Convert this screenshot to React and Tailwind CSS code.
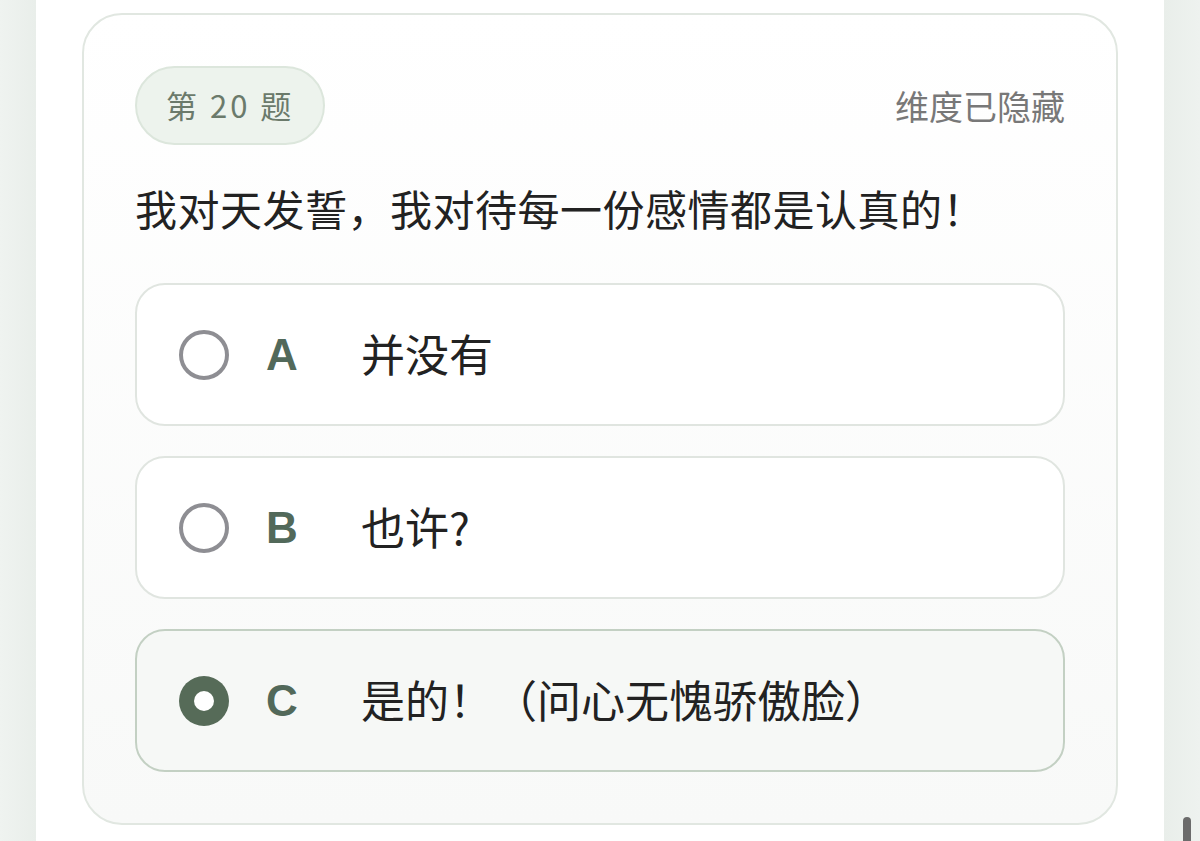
import React from 'react';

const FONT = { fontFamily: '"Noto Sans CJK SC", "Noto Sans", sans-serif' };
const LETTER_FONT = { fontFamily: '"Liberation Sans", Arial, sans-serif' };

const options = [
  { key: 'A', text: '并没有' },
  { key: 'B', text: '也许?' },
  { key: 'C', text: '是的！（问心无愧骄傲脸）', selected: true },
];

function Radio({ selected }) {
  if (selected) {
    return (
      <span className="flex h-[50px] w-[50px] shrink-0 items-center justify-center rounded-full bg-[#566b58]">
        <span className="h-[20px] w-[20px] rounded-full bg-white" />
      </span>
    );
  }
  return <span className="h-[50px] w-[50px] shrink-0 rounded-full border-[4px] border-[#8e8e93] bg-white" />;
}

function OptionRow({ option }) {
  return (
    <div
      className={`flex h-[143px] items-center rounded-[30px] border-2 pl-[42px] ${
        option.selected ? 'border-[#c3d0c3] bg-[#f6f8f6]' : 'border-[#e0e5e0] bg-white'
      }`}
    >
      <Radio selected={option.selected} />
      <span
        className="ml-[37px] w-[95px] text-[44px] font-bold leading-none text-[#52695a]"
        style={LETTER_FONT}
      >
        {option.key}
      </span>
      <span className="-mt-[4px] text-[44px] leading-none text-[#222]">{option.text}</span>
    </div>
  );
}

export default function App() {
  return (
    <div className="flex h-[841px] w-[1200px] overflow-hidden bg-[#eef2ef]" style={FONT}>
      <div className="w-[36px] shrink-0 bg-gradient-to-r from-[#eff3f0] to-[#e9eeea]" />

      <div className="w-[1128px] shrink-0 bg-white px-[46px] pt-[13px]">
        <div className="rounded-[40px] border-2 border-[#e1e7e1] bg-gradient-to-b from-white to-[#f8f9f8] px-[51px] pb-[51px] pt-[51px]">
          <div className="flex items-center justify-between">
            <span className="flex h-[79px] items-center rounded-full border-2 border-[#dce6dc] bg-[#edf3ed] px-[29px] text-[31px] tracking-[3px] text-[#6b7a6b]">
              第 20 题
            </span>
            <span className="text-[34px] text-[#787878]">维度已隐藏</span>
          </div>

          <p className="mb-[48px] mt-[36px] text-[42px] leading-[54px] tracking-[0.5px] text-[#222]">
            我对天发誓，我对待每一份感情都是认真的！
          </p>

          <div className="flex flex-col gap-[30px]">
            {options.map((o) => (
              <OptionRow key={o.key} option={o} />
            ))}
          </div>
        </div>
      </div>

      <div className="relative flex-1 bg-gradient-to-r from-[#e9eeea] to-[#eef2ef]">
        <div className="absolute left-[19px] top-[817px] h-[40px] w-[8px] rounded-full bg-[#6b6b6b]" />
      </div>
    </div>
  );
}
